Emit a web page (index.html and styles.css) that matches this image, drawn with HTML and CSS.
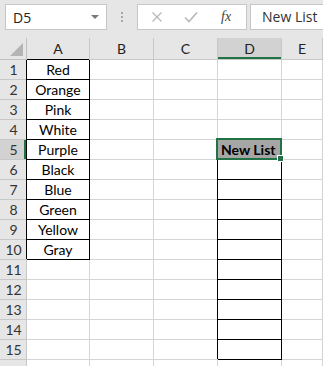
FILE: index.html
```html
<!DOCTYPE html>
<html lang="en">
<head>
    <meta charset="UTF-8">
    <title>Sheet</title>
    <link rel="stylesheet" href="styles.css">
</head>
<body>
<!-- Строка формул -->
<div class="ribbon">
    <div class="namebox"><span>D5</span><span class="caret"></span></div>
    <div class="grip"><i></i><i></i><i></i></div>
    <div class="fxbox">
        <svg width="12" height="12" viewBox="0 0 12 12"><path d="M1.5 1.5 L10.5 10.5 M10.5 1.5 L1.5 10.5" stroke="#b8b8b8" stroke-width="1.3" fill="none"/></svg>
        <svg width="14" height="12" viewBox="0 0 14 12"><path d="M1 6.5 L5 10.5 L13 1.5" stroke="#b8b8b8" stroke-width="1.6" fill="none"/></svg>
        <span class="fx">fx</span>
    </div>
    <div class="formula">New List</div>
</div>

<!-- Сетка листа -->
<div class="sheet" id="sheet"></div>

<script>
    const sheet = document.getElementById('sheet');
    const colors = ['Red', 'Orange', 'Pink', 'White', 'Purple', 'Black', 'Blue', 'Green', 'Yellow', 'Gray'];
    const cols = ['A', 'B', 'C', 'D', 'E'];

    function cell(cls, text) {
        const el = document.createElement('div');
        el.className = cls;
        if (text) el.textContent = text;
        sheet.appendChild(el);
        return el;
    }

    // Заголовки столбцов
    cell('corner');
    cols.forEach(c => cell(c === 'D' ? 'colhead active' : 'colhead', c));

    // Строки (16-я видна лишь краем, без номера)
    for (let r = 1; r <= 16; r++) {
        cell(r === 5 ? 'rowhead active' : 'rowhead', r < 16 ? String(r) : '');
        cols.forEach(c => {
            let cls = 'cell';
            let text = '';
            if (c === 'A' && r <= 10) {
                cls += ' boxed center';
                text = colors[r - 1];
            }
            if (c === 'D' && r >= 6 && r <= 15) cls += ' boxed';
            if (c === 'D' && r === 5) {
                cls += ' selected';
                text = 'New List';
            }
            cell(cls, text);
        });
    }
</script>
</body>
</html>
```

FILE: styles.css
```css
body {
    margin: 0;
    width: 323px;
    height: 366px;
    overflow: hidden;
    background: #ffffff;
    font-family: Lato, sans-serif;
}

/* Строка формул */
.ribbon {
    height: 38px;
    box-sizing: border-box;
    padding-top: 4px;
    background: #e6e6e6;
    display: flex;
    align-items: flex-start;
}

.namebox {
    margin-left: 5px;
    width: 102px;
    height: 26px;
    box-sizing: border-box;
    border: 1px solid #c6c6c6;
    background: #ffffff;
    display: flex;
    align-items: center;
    justify-content: space-between;
    padding: 0 7px 0 7px;
    font-family: "Open Sans", sans-serif;
    font-size: 14px;
    color: #222222;
}

.caret {
    width: 0;
    height: 0;
    border-left: 4px solid transparent;
    border-right: 4px solid transparent;
    border-top: 4px solid #7a7a7a;
}

.grip {
    width: 30px;
    height: 26px;
    display: flex;
    flex-direction: column;
    align-items: center;
    justify-content: center;
    gap: 2px;
}

.grip i {
    width: 2px;
    height: 2px;
    background: #a8a8a8;
}

.fxbox {
    width: 110px;
    height: 26px;
    box-sizing: border-box;
    border: 1px solid #c6c6c6;
    background: #ffffff;
    display: flex;
    align-items: center;
    padding-left: 13px;
    gap: 21px;
}

.fx {
    font-family: "Liberation Serif", serif;
    font-style: italic;
    font-size: 14px;
    color: #444444;
    margin-left: 2px;
}

.formula {
    margin-left: 3px;
    flex: 1;
    height: 26px;
    box-sizing: border-box;
    border: 1px solid #c6c6c6;
    border-right: none;
    background: #ffffff;
    padding-left: 11px;
    line-height: 24px;
    font-family: "Open Sans", sans-serif;
    font-size: 14px;
    color: #333333;
}

/* Сетка листа */
.sheet {
    display: grid;
    grid-template-columns: 27px 63px 64px 64px 64px 1fr;
    grid-template-rows: 22px;
    grid-auto-rows: 20px;
}

.sheet > div {
    box-sizing: border-box;
    border-right: 1px solid #d4d4d4;
    border-bottom: 1px solid #d4d4d4;
    font-size: 14px;
    line-height: 19px;
    white-space: nowrap;
    overflow: visible;
}

.corner {
    background: #e6e6e6;
    position: relative;
    border-color: #c0c0c0 !important;
}

.corner::after {
    content: '';
    position: absolute;
    right: 3px;
    bottom: 3px;
    width: 0;
    height: 0;
    border-left: 13px solid transparent;
    border-bottom: 13px solid #b4b4b4;
}

.colhead {
    background: #e6e6e6;
    border-color: #c8c8c8 !important;
    text-align: center;
    line-height: 22px !important;
    color: #222222;
}

.rowhead {
    background: #e6e6e6;
    border-color: #c8c8c8 !important;
    text-align: center;
    color: #333333;
    padding-left: 1px;
}

.colhead.active {
    background: #d2d2d2;
    box-shadow: inset 0 -2px 0 #217346;
}

.rowhead.active {
    background: #d2d2d2;
    box-shadow: inset -2px 0 0 #217346;
}

.cell {
    background: #ffffff;
}

.center {
    text-align: center;
    color: #000000;
}

.sheet > .boxed {
    border-right-color: #000000;
    border-bottom-color: #000000;
    box-shadow: -1px -1px 0 #000000;
}

/* Выделенная ячейка */
.sheet > .selected {
    position: relative;
    background: #a6a6a6;
    font-weight: bold;
    padding-left: 3px;
    color: #000000;
}

.selected::before {
    content: '';
    position: absolute;
    top: -2px;
    left: -2px;
    right: -1px;
    bottom: -1px;
    border: 2px solid #217346;
}

.selected::after {
    content: '';
    position: absolute;
    right: -3px;
    bottom: -3px;
    width: 5px;
    height: 5px;
    background: #217346;
    border: 1px solid #ffffff;
    z-index: 2;
}
```
